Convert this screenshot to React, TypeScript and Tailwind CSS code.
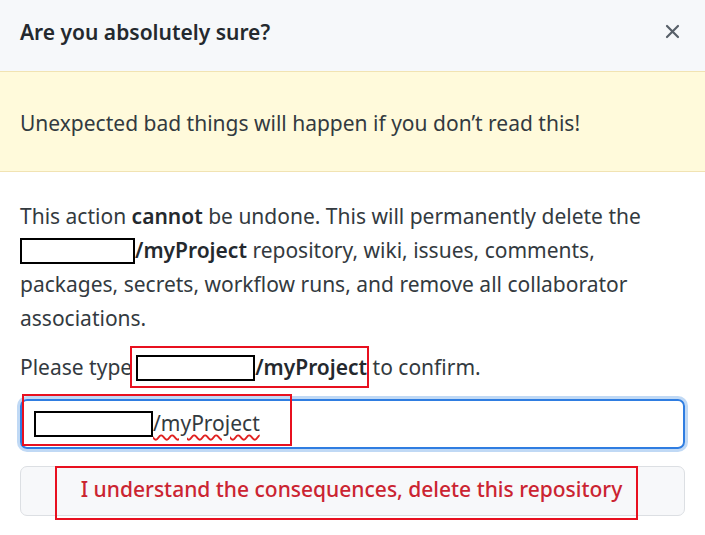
import React from "react";

function Redacted({ w }: { w: string }) {
  return (
    <span
      className={`inline-block ${w} h-[26px] border-2 border-black bg-white align-middle -mt-[3px]`}
    />
  );
}

export default function App() {
  return (
    <div
      className="w-[705px] h-[535px] bg-white text-[#333a40] overflow-hidden"
      style={{ fontFamily: '"Noto Sans", "Open Sans", sans-serif' }}
    >
      {/* header */}
      <div className="h-[72px] bg-[#f6f8fa] border-b border-[#f1e3b3] flex items-center justify-between pl-5 pr-[25px]">
        <h1 className="text-[21px] font-semibold text-[#24292e] -mt-[6px]">Are you absolutely sure?</h1>
        <svg width="15" height="15" viewBox="0 0 15 15" className="text-[#586069] -mt-[8px]">
          <path d="M2 2 L13 13 M13 2 L2 13" stroke="currentColor" strokeWidth="2.2" strokeLinecap="round" />
        </svg>
      </div>

      {/* flash */}
      <div className="h-[100px] bg-[#fffadb] border-b border-[#f1e3b3] flex items-center px-5 text-[21px]">
        <span className="mt-[4px]">Unexpected bad things will happen if you don’t read this!</span>
      </div>

      {/* body */}
      <div className="px-5 pt-[27px]">
        <p className="text-[21px] leading-[34px]">
          This action <b className="font-semibold text-[#24292e]">cannot</b> be undone. This will permanently delete the{" "}
          <Redacted w="w-[115px]" />
          <b className="font-semibold text-[#24292e]">/myProject</b> repository, wiki, issues, comments, packages, secrets,
          workflow runs, and remove all collaborator associations.
        </p>

        <p className="text-[21px] leading-[34px] mt-[15px]">
          Please type
          <span className="relative inline-block">
            <Redacted w="w-[119px] ml-[4px]" />
            <b className="font-semibold text-[#24292e]">/myProject</b>
            <span className="absolute -left-[2px] -right-[2px] top-[-4px] bottom-[-4px] border-2 border-[#e8101f]" />
          </span>{" "}
          to confirm.
        </p>

        <div className="relative mt-[15px]">
          <div className="h-[50px] rounded-[7px] border-2 border-[#2f7de1] shadow-[0_0_0_3px_rgba(3,102,214,0.25)] flex items-center pl-[12px] text-[21px]">
            <span className="underline decoration-wavy decoration-[#e02020] decoration-[1.5px] underline-offset-[3px] pl-[6px]">
              <Redacted w="w-[119px] -ml-[6px]" />
            </span>
            <span className="underline decoration-wavy decoration-[#e02020] decoration-[1.5px] underline-offset-[3px]">
              /myProject
            </span>
          </div>
          <span className="absolute left-[2px] top-[-5px] w-[270px] h-[52px] border-2 border-[#e8101f]" />
        </div>

        <div className="relative mt-[17px]">
          <button className="w-full h-[50px] rounded-[7px] border border-[#dcdfe3] bg-[#f7f8fa] text-[#cb2431] text-[21px] font-medium flex items-center justify-center">
            <span className="-mt-[2px] pr-[2px]">I understand the consequences, delete this repository</span>
          </button>
          <span className="absolute left-[35px] top-0 w-[583px] h-[54px] border-2 border-[#e8101f]" />
        </div>
      </div>
    </div>
  );
}
